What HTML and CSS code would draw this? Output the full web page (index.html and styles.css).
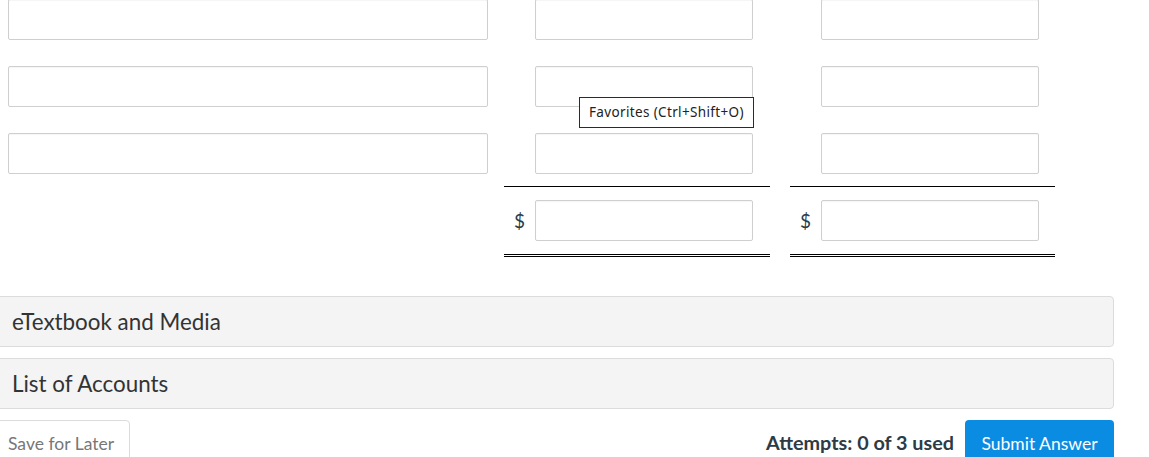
FILE: index.html
```html
<!DOCTYPE html>
<html>
<head>
<meta charset="utf-8">
<link rel="stylesheet" href="styles.css">
</head>
<body>
<div class="page">
  <div class="sheet">
    <div class="row row-first">
      <div class="cell-label"><div class="field"></div></div>
      <div class="cell-amt"><div class="field"></div></div>
      <div class="cell-amt cell-last"><div class="field"></div></div>
    </div>
    <div class="row">
      <div class="cell-label"><div class="field"></div></div>
      <div class="cell-amt"><div class="field"></div></div>
      <div class="cell-amt cell-last"><div class="field"></div></div>
    </div>
    <div class="row row-sub">
      <div class="cell-label"><div class="field"></div></div>
      <div class="cell-amt ruled"><div class="field"></div></div>
      <div class="cell-amt cell-last ruled"><div class="field"></div></div>
    </div>
    <div class="row row-total">
      <div class="cell-label"></div>
      <div class="cell-amt double"><span class="cur">$</span><div class="field"></div></div>
      <div class="cell-amt cell-last double"><span class="cur">$</span><div class="field"></div></div>
    </div>
    <div class="tooltip">Favorites (Ctrl+Shift+O)</div>
  </div>

  <div class="lower">
    <div class="panel">eTextbook and Media</div>
    <div class="panel">List of Accounts</div>
    <div class="footer">
      <button class="btn-save">Save for Later</button>
      <div class="submit-group">
        <span class="attempts">Attempts: 0 of 3 used</span>
        <button class="btn-submit">Submit Answer</button>
      </div>
    </div>
  </div>
</div>
</body>
</html>
```

FILE: styles.css
```css
html, body {
  margin: 0;
  padding: 0;
  background: #fff;
  overflow: hidden;
}

body {
  font-family: Lato, "Liberation Sans", sans-serif;
  color: #333;
}

.page {
  width: 1149px;
  height: 457px;
  overflow: hidden;
}

.sheet {
  position: relative;
  margin-top: -1px;
}

.row {
  display: flex;
  padding-left: 8px;
}

.row .field {
  height: 41px;
}

.cell-label {
  width: 480px;
  padding-bottom: 26px;
}

.cell-amt {
  width: 266px;
  margin-left: 16px;
  padding-left: 31px;
  box-sizing: border-box;
  padding-bottom: 26px;
  display: flex;
  align-items: center;
  position: relative;
}

.cell-last {
  margin-left: 20px;
  width: 265px;
}

.cell-amt .field {
  width: 218px;
}

.field {
  box-sizing: border-box;
  width: 100%;
  border: 1px solid #cfcfcf;
  border-radius: 2px;
  background: #fff;
  box-shadow: inset 0 1px 1px rgba(0,0,0,0.04);
}

.row-sub .cell-label,
.row-sub .cell-amt {
  padding-bottom: 12px;
}

.ruled {
  border-bottom: 1px solid #000;
}

.row-total .cell-amt {
  padding-top: 13px;
  padding-bottom: 13px;
}

.double {
  border-bottom: 3px double #000;
}

.cur {
  position: absolute;
  left: 10px;
  top: 13px;
  height: 41px;
  line-height: 41px;
  font-size: 19px;
  color: #2d3b45;
}

.tooltip {
  position: absolute;
  left: 579px;
  top: 98px;
  box-sizing: border-box;
  height: 31px;
  padding: 0 9px 0 9px;
  line-height: 29px;
  border: 1px solid #2b2b2b;
  background: #fff;
  font-family: "Noto Sans", "Open Sans", sans-serif;
  font-size: 13.5px;
  letter-spacing: 0.35px;
  color: #222;
  white-space: nowrap;
}

.lower {
  margin-left: -6px;
  width: 1120px;
  margin-top: 39px;
}

.panel {
  box-sizing: border-box;
  height: 51px;
  border: 1px solid #dcdcdc;
  border-radius: 4px;
  background: #f4f4f4;
  padding-left: 17px;
  line-height: 49px;
  font-size: 22.4px;
  color: #333;
}

.panel + .panel {
  margin-top: 11px;
}

.footer {
  margin-top: 11px;
  display: flex;
  justify-content: space-between;
  align-items: flex-start;
}

.btn-save {
  box-sizing: border-box;
  width: 136px;
  height: 48px;
  border: 1px solid #dcdcdc;
  border-radius: 4px;
  background: #fff;
  font-family: Lato, "Liberation Sans", sans-serif;
  font-size: 17.5px;
  color: #777;
  text-align: left;
  padding: 0 0 0 13px;
  line-height: 46px;
}

.submit-group {
  display: flex;
  align-items: flex-start;
  gap: 11px;
}

.attempts {
  font-weight: bold;
  font-size: 19.8px;
  color: #2d3b45;
  line-height: 44px;
}

.btn-submit {
  box-sizing: border-box;
  width: 149px;
  height: 48px;
  border: none;
  border-radius: 4px;
  background: #0b8ce3;
  color: #fff;
  font-family: Lato, "Liberation Sans", sans-serif;
  font-size: 17.5px;
  padding: 0;
  line-height: 46px;
}
```
